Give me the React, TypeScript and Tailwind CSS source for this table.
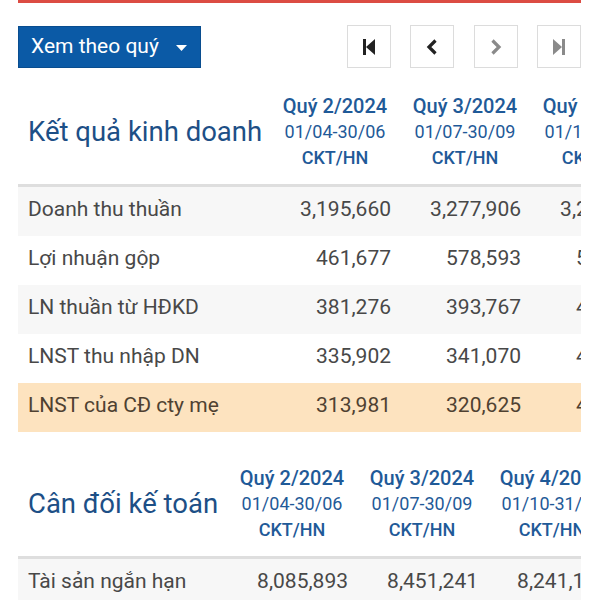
import React from "react";

const font = { fontFamily: "Roboto, 'Noto Sans', sans-serif" };

type Col = { q: string; d: string };

function NavBox({ children }: { children: React.ReactNode }) {
  return (
    <div className="w-[44px] h-[43px] border border-[#dcdcdc] bg-white flex items-center justify-center">
      {children}
    </div>
  );
}

function Section({
  title,
  labelW,
  cols,
  rows,
  highlightLast,
}: {
  title: string;
  labelW: number;
  cols: Col[];
  rows: { label: string; vals: string[] }[];
  highlightLast?: boolean;
}) {
  const gridStyle = { gridTemplateColumns: `${labelW}px 130px 130px 130px` };
  return (
    <div className="w-[563px] overflow-hidden">
      <div className="grid w-max pb-[13px] border-b-[3px] border-[#dedede]" style={gridStyle}>
        <div className="flex items-center pl-[10px] text-[27.5px] text-[#1d4f86] leading-none whitespace-nowrap">
          {title}
        </div>
        {cols.map((c, i) => (
          <div key={i} className="flex flex-col items-center text-[#1f5a98] whitespace-nowrap">
            <div className="text-[20px] font-medium leading-[26px]">{c.q}</div>
            <div className="text-[18px] leading-[26px]">{c.d}</div>
            <div className="text-[18px] font-medium leading-[26px]">CKT/HN</div>
          </div>
        ))}
      </div>
      {rows.map((r, i) => {
        const last = highlightLast && i === rows.length - 1;
        const bg = last ? "bg-[#fde3bf] text-[#4f4131]" : i % 2 === 0 ? "bg-[#f7f7f7] text-[#484848]" : "bg-white text-[#484848]";
        return (
          <div key={i} className={`grid w-max h-[49px] items-center text-[21px] ${bg}`} style={gridStyle}>
            <div className="pl-[10px] pb-[3px] whitespace-nowrap">{r.label}</div>
            {r.vals.map((v, j) => (
              <div key={j} className="text-right pr-[9px] pb-[3px] whitespace-nowrap">
                {v}
              </div>
            ))}
          </div>
        );
      })}
    </div>
  );
}

export default function App() {
  return (
    <div className="w-[600px] h-[600px] bg-white overflow-hidden" style={font}>
      <div className="ml-[18px] w-[563px]">
        <div className="h-[3px] bg-[#dc4c43]" />
        <div className="mt-[22px] flex items-center justify-between">
          <div className="w-[183px] h-[42px] bg-[#0b5aa6] border border-[#094d8f] flex items-center pl-[12px] text-white text-[21px]">
            <span>Xem theo quý</span>
            <svg width="11" height="6" viewBox="0 0 11 6" className="ml-[17px] mt-[2px]">
              <path d="M0 0 L11 0 L5.5 6 Z" fill="white" />
            </svg>
          </div>
          <div className="w-[234px] flex justify-between">
            <NavBox>
              <svg width="14" height="16" viewBox="0 0 14 16">
                <rect x="1" y="0" width="3" height="16" fill="#222" />
                <path d="M13 0 L4 8 L13 16 Z" fill="#222" />
              </svg>
            </NavBox>
            <NavBox>
              <svg width="12" height="16" viewBox="0 0 12 16">
                <path d="M9.5 1.5 L3 8 L9.5 14.5" fill="none" stroke="#222" strokeWidth="3.2" />
              </svg>
            </NavBox>
            <NavBox>
              <svg width="12" height="16" viewBox="0 0 12 16">
                <path d="M2.5 1.5 L9 8 L2.5 14.5" fill="none" stroke="#8a8a8a" strokeWidth="3.2" />
              </svg>
            </NavBox>
            <NavBox>
              <svg width="14" height="16" viewBox="0 0 14 16">
                <path d="M1 0 L10 8 L1 16 Z" fill="#8a8a8a" />
                <rect x="10" y="0" width="3" height="16" fill="#8a8a8a" />
              </svg>
            </NavBox>
          </div>
        </div>
        <div className="mt-[25px]">
          <Section
            title="Kết quả kinh doanh"
            labelW={252}
            cols={[
              { q: "Quý 2/2024", d: "01/04-30/06" },
              { q: "Quý 3/2024", d: "01/07-30/09" },
              { q: "Quý 4/2024", d: "01/10-31/12" },
            ]}
            rows={[
              { label: "Doanh thu thuần", vals: ["3,195,660", "3,277,906", "3,270,115"] },
              { label: "Lợi nhuận gộp", vals: ["461,677", "578,593", "510,402"] },
              { label: "LN thuần từ HĐKD", vals: ["381,276", "393,767", "412,530"] },
              { label: "LNST thu nhập DN", vals: ["335,902", "341,070", "402,118"] },
              { label: "LNST của CĐ cty mẹ", vals: ["313,981", "320,625", "410,226"] },
            ]}
            highlightLast
          />
        </div>
        <div className="mt-[33px]">
          <Section
            title="Cân đối kế toán"
            labelW={209}
            cols={[
              { q: "Quý 2/2024", d: "01/04-30/06" },
              { q: "Quý 3/2024", d: "01/07-30/09" },
              { q: "Quý 4/2024", d: "01/10-31/12" },
            ]}
            rows={[{ label: "Tài sản ngắn hạn", vals: ["8,085,893", "8,451,241", "8,241,120"] }]}
          />
        </div>
      </div>
    </div>
  );
}
